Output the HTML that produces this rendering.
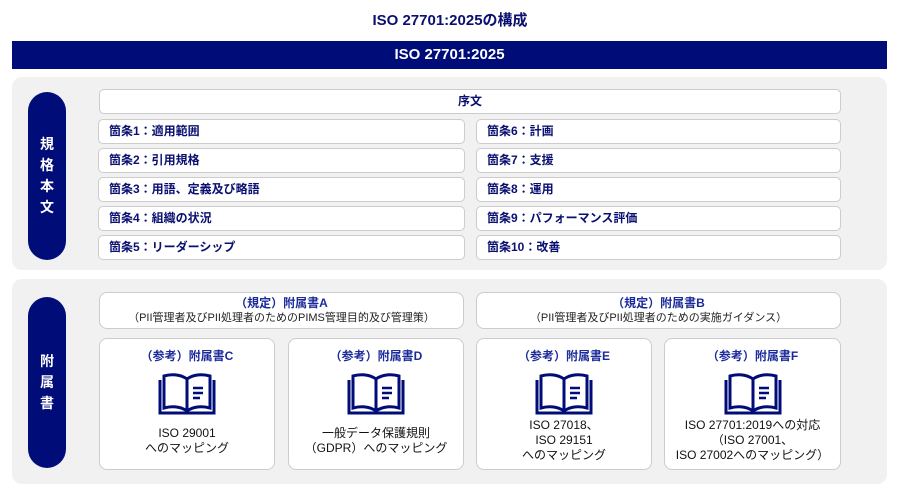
<html><head><style>
body{margin:0;width:900px;height:487px;background:#fff;font-family:"Liberation Sans","Noto Sans CJK JP",sans-serif;color:#0a1070;position:relative;overflow:hidden}
.a{position:absolute;box-sizing:border-box}
.t{left:0;width:900px;top:9px;text-align:center;font-size:15px;font-weight:bold}
.bar{left:12px;width:875px;top:41px;height:28px;background:#000c78;color:#fff;text-align:center;font-size:15px;font-weight:bold;line-height:28px}
.panel{left:12px;width:875px;background:#f1f1f1;border-radius:10px}
.pill{left:28px;width:38px;background:#000c78;border-radius:19px;color:#fff;font-weight:bold;font-size:14px;display:flex;flex-direction:column;align-items:center;justify-content:center;line-height:21px}
.r{background:#fff;border:1px solid #ccc;border-radius:5px;height:25px;font-size:12px;font-weight:bold;line-height:23px;padding-left:10px}
.c{background:#fff;border:1px solid #ccc;border-radius:8px;text-align:center}
.h{font-size:12px;font-weight:bold;color:#1a2a9a}
.s{font-size:11px;color:#222}
.d{font-size:12px;color:#111;line-height:15px;position:absolute;left:0;right:0}
svg{position:absolute;left:50%;margin-left:-29px;top:32px}
</style></head><body>
<div class="a t">ISO 27701:2025の構成</div>
<div class="a bar">ISO 27701:2025</div>
<div class="a panel" style="top:77px;height:193px"></div>
<div class="a pill" style="top:92px;height:168px"><span>規</span><span>格</span><span>本</span><span>文</span></div>
<div class="a r" style="left:99px;width:742px;top:89px;text-align:center;padding:0">序文</div>
<div class="a r" style="left:98px;width:367px;top:119px">箇条1：適用範囲</div>
<div class="a r" style="left:98px;width:367px;top:148px">箇条2：引用規格</div>
<div class="a r" style="left:98px;width:367px;top:177px">箇条3：用語、定義及び略語</div>
<div class="a r" style="left:98px;width:367px;top:206px">箇条4：組織の状況</div>
<div class="a r" style="left:98px;width:367px;top:235px">箇条5：リーダーシップ</div>
<div class="a r" style="left:476px;width:365px;top:119px">箇条6：計画</div>
<div class="a r" style="left:476px;width:365px;top:148px">箇条7：支援</div>
<div class="a r" style="left:476px;width:365px;top:177px">箇条8：運用</div>
<div class="a r" style="left:476px;width:365px;top:206px">箇条9：パフォーマンス評価</div>
<div class="a r" style="left:476px;width:365px;top:235px">箇条10：改善</div>
<div class="a panel" style="top:279px;height:205px"></div>
<div class="a pill" style="top:297px;height:171px"><span>附</span><span>属</span><span>書</span></div>
<div class="a c" style="left:99px;width:365px;top:292px;height:37px;padding-top:3px;line-height:15px"><div class="h">（規定）附属書A</div><div class="s">（PII管理者及びPII処理者のためのPIMS管理目的及び管理策）</div></div>
<div class="a c" style="left:476px;width:365px;top:292px;height:37px;padding-top:3px;line-height:15px"><div class="h">（規定）附属書B</div><div class="s">（PII管理者及びPII処理者のための実施ガイダンス）</div></div>
<div class="a c" style="left:99px;width:176px;top:338px;height:132px"><div class="h" style="margin-top:8px">（参考）附属書C</div>
<svg width="58" height="44" viewBox="0 0 58 44" fill="none" stroke="#000c78" stroke-width="3"><path d="M29 8C22 3 13 3 6 5V37C13 35 22 35 29 40C36 35 45 35 52 37V5C45 3 36 3 29 8Z M29 8V40 M2 9V42H56V9"/><path d="M35 17H45M35 22H45M35 27H42" stroke-width="2.5"/></svg>
<div class="d" style="top:87px">ISO 29001<br>へのマッピング</div></div>
<div class="a c" style="left:288px;width:176px;top:338px;height:132px"><div class="h" style="margin-top:8px">（参考）附属書D</div>
<svg width="58" height="44" viewBox="0 0 58 44" fill="none" stroke="#000c78" stroke-width="3"><path d="M29 8C22 3 13 3 6 5V37C13 35 22 35 29 40C36 35 45 35 52 37V5C45 3 36 3 29 8Z M29 8V40 M2 9V42H56V9"/><path d="M35 17H45M35 22H45M35 27H42" stroke-width="2.5"/></svg>
<div class="d" style="top:87px">一般データ保護規則<br>（GDPR）へのマッピング</div></div>
<div class="a c" style="left:476px;width:176px;top:338px;height:132px"><div class="h" style="margin-top:8px">（参考）附属書E</div>
<svg width="58" height="44" viewBox="0 0 58 44" fill="none" stroke="#000c78" stroke-width="3"><path d="M29 8C22 3 13 3 6 5V37C13 35 22 35 29 40C36 35 45 35 52 37V5C45 3 36 3 29 8Z M29 8V40 M2 9V42H56V9"/><path d="M35 17H45M35 22H45M35 27H42" stroke-width="2.5"/></svg>
<div class="d" style="top:79px">ISO 27018、<br>ISO 29151<br>へのマッピング</div></div>
<div class="a c" style="left:664px;width:177px;top:338px;height:132px"><div class="h" style="margin-top:8px">（参考）附属書F</div>
<svg width="58" height="44" viewBox="0 0 58 44" fill="none" stroke="#000c78" stroke-width="3"><path d="M29 8C22 3 13 3 6 5V37C13 35 22 35 29 40C36 35 45 35 52 37V5C45 3 36 3 29 8Z M29 8V40 M2 9V42H56V9"/><path d="M35 17H45M35 22H45M35 27H42" stroke-width="2.5"/></svg>
<div class="d" style="top:79px">ISO 27701:2019への対応<br>（ISO 27001、<br>ISO 27002へのマッピング）</div></div>
</body></html>
